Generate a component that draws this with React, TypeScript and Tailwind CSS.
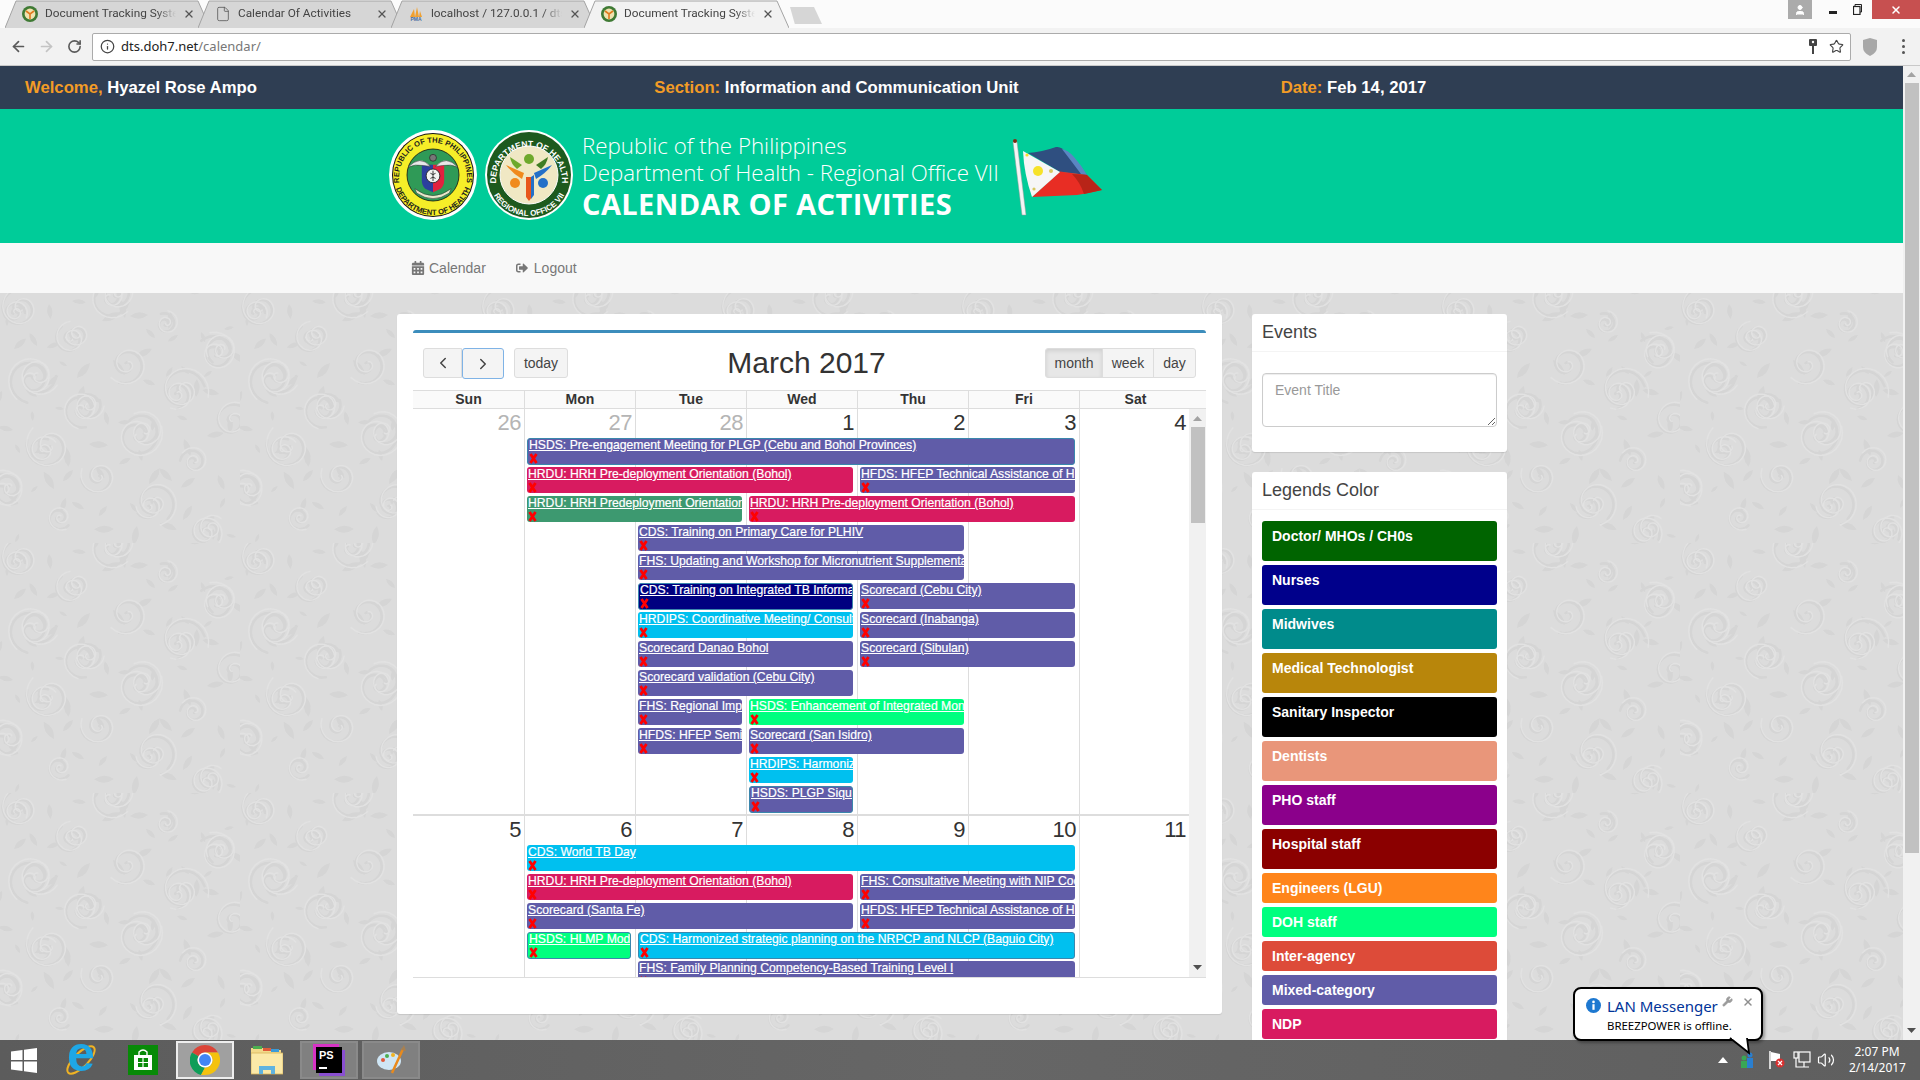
import React from "react";
import { ChevronLeft, ChevronRight, ArrowLeft, ArrowRight, RotateCw, Info, Star, X, Wrench, User, File, Volume2 } from "lucide-react";
import { FaCalendarAlt, FaSignOutAlt } from "react-icons/fa";

const PURPLE = "bg-[#605ca8]";
const PINK = "bg-[#d81b60]";
const SEA = "bg-[#3d9970]";
const NAVY = "bg-[#000080]";
const AQUA = "bg-[#00c0ef]";
const LIME = "bg-[#00ff7f]";

type Ev = { t: string; c: string; p: string; b?: boolean };

const week1: Ev[] = [
  { t: "HSDS: Pre-engagement Meeting for PLGP (Cebu and Bohol Provinces)", c: PURPLE, p: "col-start-2 col-span-5 row-start-2", b: true },
  { t: "HRDU: HRH Pre-deployment Orientation (Bohol)", c: PINK, p: "col-start-2 col-span-3 row-start-3" },
  { t: "HFDS: HFEP Technical Assistance of HFEP", c: PURPLE, p: "col-start-5 col-span-2 row-start-3" },
  { t: "HRDU: HRH Predeployment Orientation", c: SEA, p: "col-start-2 col-span-2 row-start-4" },
  { t: "HRDU: HRH Pre-deployment Orientation (Bohol)", c: PINK, p: "col-start-4 col-span-3 row-start-4" },
  { t: "CDS: Training on Primary Care for PLHIV", c: PURPLE, p: "col-start-3 col-span-3 row-start-5" },
  { t: "FHS: Updating and Workshop for Micronutrient Supplementation", c: PURPLE, p: "col-start-3 col-span-3 row-start-6" },
  { t: "CDS: Training on Integrated TB Information", c: NAVY, p: "col-start-3 col-span-2 row-start-7", b: true },
  { t: "Scorecard (Cebu City)", c: PURPLE, p: "col-start-5 col-span-2 row-start-7" },
  { t: "HRDIPS: Coordinative Meeting/ Consultation", c: AQUA, p: "col-start-3 col-span-2 row-start-8" },
  { t: "Scorecard (Inabanga)", c: PURPLE, p: "col-start-5 col-span-2 row-start-8" },
  { t: "Scorecard Danao Bohol", c: PURPLE, p: "col-start-3 col-span-2 row-start-9" },
  { t: "Scorecard (Sibulan)", c: PURPLE, p: "col-start-5 col-span-2 row-start-9" },
  { t: "Scorecard validation (Cebu City)", c: PURPLE, p: "col-start-3 col-span-2 row-start-10" },
  { t: "FHS: Regional Implementation", c: PURPLE, p: "col-start-3 col-span-1 row-start-11" },
  { t: "HSDS: Enhancement of Integrated Monitoring", c: LIME, p: "col-start-4 col-span-2 row-start-11" },
  { t: "HFDS: HFEP Seminar", c: PURPLE, p: "col-start-3 col-span-1 row-start-12" },
  { t: "Scorecard (San Isidro)", c: PURPLE, p: "col-start-4 col-span-2 row-start-12" },
  { t: "HRDIPS: Harmonization", c: AQUA, p: "col-start-4 col-span-1 row-start-13" },
  { t: "HSDS: PLGP Siquijor", c: PURPLE, p: "col-start-4 col-span-1 row-start-14", b: true },
];

const week2: Ev[] = [
  { t: "CDS: World TB Day", c: AQUA, p: "col-start-2 col-span-5 row-start-2" },
  { t: "HRDU: HRH Pre-deployment Orientation (Bohol)", c: PINK, p: "col-start-2 col-span-3 row-start-3" },
  { t: "FHS: Consultative Meeting with NIP Coordinators", c: PURPLE, p: "col-start-5 col-span-2 row-start-3" },
  { t: "Scorecard (Santa Fe)", c: PURPLE, p: "col-start-2 col-span-3 row-start-4" },
  { t: "HFDS: HFEP Technical Assistance of HFEP", c: PURPLE, p: "col-start-5 col-span-2 row-start-4" },
  { t: "HSDS: HLMP Module", c: LIME, p: "col-start-2 col-span-1 row-start-5", b: true },
  { t: "CDS: Harmonized strategic planning on the NRPCP and NLCP (Baguio City)", c: AQUA, p: "col-start-3 col-span-4 row-start-5", b: true },
  { t: "FHS: Family Planning Competency-Based Training Level I", c: PURPLE, p: "col-start-3 col-span-4 row-start-6" },
];

const legends: { t: string; c: string; h: string }[] = [
  { t: "Doctor/ MHOs / CH0s", c: "bg-[#006400]", h: "h-[40px]" },
  { t: "Nurses", c: "bg-[#00008b]", h: "h-[40px]" },
  { t: "Midwives", c: "bg-[#008b8b]", h: "h-[40px]" },
  { t: "Medical Technologist", c: "bg-[#b8860b]", h: "h-[40px]" },
  { t: "Sanitary Inspector", c: "bg-[#000000]", h: "h-[40px]" },
  { t: "Dentists", c: "bg-[#e9967a]", h: "h-[40px]" },
  { t: "PHO staff", c: "bg-[#8b008b]", h: "h-[40px]" },
  { t: "Hospital staff", c: "bg-[#8b0000]", h: "h-[40px]" },
  { t: "Engineers (LGU)", c: "bg-[#ff851b]", h: "h-[30px]" },
  { t: "DOH staff", c: "bg-[#00ff7f]", h: "h-[30px]" },
  { t: "Inter-agency", c: "bg-[#dd4b39]", h: "h-[30px]" },
  { t: "Mixed-category", c: "bg-[#605ca8]", h: "h-[30px]" },
  { t: "NDP", c: "bg-[#d81b60]", h: "h-[30px]" },
];

function spiral(cx: number, cy: number, r: number, start: number, turns: number, dir = 1) {
  let d = "";
  const n = Math.round(turns * 24);
  for (let i = 0; i <= n; i++) {
    const f = i / n;
    const a = start + dir * f * turns * Math.PI * 2;
    const rr = r * (1 - f * 0.9);
    d += `${i ? "L" : "M"}${(cx + rr * Math.cos(a)).toFixed(1)} ${(cy + rr * Math.sin(a)).toFixed(1)}`;
  }
  return d;
}

const swirlList = Array.from({ length: 30 }, (_, i) => ({
  x: (i * 67 + 14) % 240,
  y: (i * 97 + 20) % 250,
  r: 11 + (i * 7) % 13,
  a: i * 1.3,
  dir: i % 2 ? 1 : -1,
}));
const leafList = Array.from({ length: 70 }, (_, i) => ({
  x: (i * 41 + 7) % 240,
  y: (i * 59 + 33) % 250,
  l: 9 + (i * 5) % 12,
  a: (i * 47) % 360,
}));

function Texture() {
  return (
    <svg className="absolute inset-0 w-full h-full" aria-hidden="true">
      <defs>
        <pattern id="damask" width="240" height="250" patternUnits="userSpaceOnUse">
          {leafList.map((s, i) => (
            <path key={"l" + i} d={`M0 0 Q${s.l * 0.35} ${-s.l / 2} 0 ${-s.l} Q${-s.l * 0.35} ${-s.l / 2} 0 0Z`} transform={`translate(${s.x} ${s.y}) rotate(${s.a})`} fill="#d5d5d5" />
          ))}
          {swirlList.map((s, i) => (
            <path key={i} d={spiral(s.x, s.y, s.r, s.a, 1.6, s.dir)} fill="none" stroke="#d5d5d5" strokeWidth="2.6" strokeLinecap="round" />
          ))}
          {swirlList.map((s, i) => (
            <path key={"b" + i} d={spiral(s.x + 1.5, s.y - 1, s.r * 1.12, s.a + 0.5, 1.6, s.dir)} fill="none" stroke="#e2e2e2" strokeWidth="1.4" strokeLinecap="round" />
          ))}
        </pattern>
      </defs>
      <rect width="100%" height="100%" fill="url(#damask)" />
    </svg>
  );
}

function RedX() {
  return (
    <svg width="9" height="11" viewBox="0 0 9 11" className="block ml-[1px] mt-[1px]">
      <path d="M1.5 1 L7.5 10 M7.5 1 L1.5 10" stroke="#ff0000" strokeWidth="2.8" />
    </svg>
  );
}

function Event({ e }: { e: Ev }) {
  return (
    <div className={`${e.p} ${e.c} ${e.b ? "border border-[#3a87ad] -mx-[0.5px] -mt-[0.5px] h-[27px]" : "h-[26px]"} ml-[3px] mr-[4px] rounded-[3px] overflow-hidden relative z-10`}>
      <div className={`whitespace-nowrap overflow-hidden text-[12.2px] leading-[14px] text-white underline pl-[1px] [-webkit-text-stroke:0.2px_white] ${e.b ? "-mt-[1px]" : ""}`}>{e.t}</div>
      <RedX />
    </div>
  );
}

function Week({ days, events, muted, cls }: { days: string[]; events: Ev[]; muted: number; cls: string }) {
  const cols = ["col-start-1", "col-start-2", "col-start-3", "col-start-4", "col-start-5", "col-start-6", "col-start-7"];
  return (
    <div className={`grid grid-cols-[repeat(6,111px)_1fr] grid-rows-[repeat(14,29px)] border-b-2 border-[#ddd] ${cls}`}>
      {days.map((d, i) => (
        <div key={d} className={`${cols[i]} row-start-1 row-span-14 ${i > 0 ? "border-l border-[#ddd]" : ""} text-right pr-[3px] text-[22px] leading-[27px] tracking-[-0.5px] ${i < muted ? "text-[#b5b5b5]" : "text-[#333]"}`}>
          {d}
        </div>
      ))}
      {events.map((e) => (
        <Event key={e.t + e.p} e={e} />
      ))}
    </div>
  );
}

function Bar({ thumbTop, thumbH }: { thumbTop: string; thumbH: string }) {
  return (
    <div className="w-[17px] h-full bg-[#f1f1f1] flex flex-col items-center shrink-0">
      <div className={`${thumbTop} flex items-center justify-center w-full shrink-0`}>
        <svg width="9" height="5" viewBox="0 0 9 5"><path d="M4.5 0 L9 5 H0Z" fill="#a3a3a3" /></svg>
      </div>
      <div className={`${thumbH} w-[14px] bg-[#c1c1c1] shrink-0`} />
      <div className="flex-1" />
      <div className="h-[17px] flex items-center justify-center w-full shrink-0 mb-[1px]">
        <svg width="9" height="5" viewBox="0 0 9 5"><path d="M0 0 H9 L4.5 5Z" fill="#505050" /></svg>
      </div>
    </div>
  );
}

function RepublicLogo() {
  return (
    <svg width="90" height="92" viewBox="0 0 90 92">
      <defs>
        <path id="rTop" d="M14.2 63.5 A34 35 0 1 1 75.8 63.5" />
        <path id="rBot" d="M5.5 46 A39.5 40 0 0 0 84.5 46" />
      </defs>
      <ellipse cx="45" cy="46" rx="44" ry="45" fill="#fff" />
      <ellipse cx="45" cy="46" rx="41" ry="42" fill="#111" />
      <ellipse cx="45" cy="46" rx="40" ry="41" fill="#f6ee28" />
      <text fontSize="7.6" fontWeight="700" fill="#1c1c1c" fontFamily="Liberation Sans, sans-serif"><textPath href="#rTop" startOffset="50%" textAnchor="middle">REPUBLIC OF THE PHILIPPINES</textPath></text>
      <text fontSize="7.6" fontWeight="700" fill="#1c1c1c" fontFamily="Liberation Sans, sans-serif"><textPath href="#rBot" startOffset="50%" textAnchor="middle">DEPARTMENT OF HEALTH</textPath></text>
      <circle cx="45" cy="46" r="26" fill="#2f9a57" stroke="#111" strokeWidth="0.8" />
      <g transform="translate(45 46) scale(0.86) translate(-45 -46)">
        <path d="M32 34 H45 V66 L36 62 Q32 58 32 52Z" fill="#2b3f9e" />
        <path d="M45 34 H58 V52 Q58 58 54 62 L45 66Z" fill="#e2213f" />
        <path d="M16 37 Q30 22 42 36 L34 35 Q24 33 16 37Z" fill="#e8e8e8" stroke="#333" strokeWidth="0.6" />
        <path d="M74 37 Q60 22 48 36 L56 35 Q66 33 74 37Z" fill="#e8e8e8" stroke="#333" strokeWidth="0.6" />
        <circle cx="45" cy="26" r="4" fill="#777" stroke="#222" strokeWidth="0.8" />
        <circle cx="45" cy="47" r="8" fill="#f3f3f3" stroke="#222" />
        <path d="M45 41 V53 M42 44 Q45 47 48 44 M42 50 Q45 47 48 50" stroke="#222" strokeWidth="1" fill="none" />
        <path d="M24 62 Q45 78 66 62 L64 67 Q45 80 26 67Z" fill="#e8e8c8" stroke="#333" strokeWidth="0.6" />
      </g>
    </svg>
  );
}

function DohLogo() {
  return (
    <svg width="90" height="92" viewBox="0 0 90 92">
      <defs>
        <path id="dTop" d="M13.5 62 A33 34 0 1 1 76.5 62" />
        <path id="dBot" d="M4.5 46 A40.5 41 0 0 0 85.5 46" />
      </defs>
      <ellipse cx="45" cy="46" rx="44" ry="45" fill="#fff" />
      <ellipse cx="45" cy="46" rx="42" ry="43" fill="#1d5a1e" />
      <text fontSize="8.6" fontWeight="700" fill="#fff" fontFamily="Liberation Sans, sans-serif"><textPath href="#dTop" startOffset="50%" textAnchor="middle">DEPARTMENT OF HEALTH</textPath></text>
      <text fontSize="8" fontWeight="700" fill="#fff" fontFamily="Liberation Sans, sans-serif"><textPath href="#dBot" startOffset="50%" textAnchor="middle">REGIONAL OFFICE VII</textPath></text>
      <circle cx="45" cy="46" r="29" fill="#f0e8c4" stroke="#fff" />
      <path d="M22 36 L40 44 L38 50 Q28 44 22 36Z" fill="#f08a1d" />
      <path d="M68 36 L50 44 L52 50 Q62 44 68 36Z" fill="#2370c8" />
      <path d="M42 48 H48 V68 L45 72 L42 68Z" fill="#e8561a" />
      <path d="M47 48 L50 46 V66 L47 70Z" fill="#2370c8" />
      <path d="M26 28 L38 36 L33 40 Q27 35 26 28Z" fill="#6ea92c" />
      <path d="M64 28 L52 36 L57 40 Q63 35 64 28Z" fill="#3f7d22" />
      <circle cx="45" cy="30" r="5" fill="#6ea92c" />
      <circle cx="31" cy="54" r="5" fill="#f08a1d" />
      <circle cx="59" cy="54" r="5" fill="#2370c8" />
    </svg>
  );
}

function Flag() {
  return (
    <svg width="92" height="78" viewBox="0 0 92 78">
      <path d="M1 4 L3 1 L5 4 L14 77 H10Z" fill="#f4f4f4" stroke="#9a9a9a" strokeWidth="0.5" />
      <circle cx="3" cy="3" r="2" fill="#7a2a10" />
      <path d="M16 15 Q30 14 44 9 Q50 8 54 15 Q66 26 75 37 L48 34Z" fill="#2f4f80" />
      <path d="M50 11 Q56 12 62 19 Q70 28 75 37 L69 36 Q60 24 50 11Z" fill="#5b86c2" />
      <path d="M48 33.5 L75 37 L90 52 Q78 55 65 57 Q42 58 20 59Z" fill="#e82d24" />
      <path d="M60 36 L75 37 L90 52 L72 56 Q68 44 60 36Z" fill="#b82418" />
      <path d="M11 13 L48 34 L20 59 Q12 36 11 13Z" fill="#f6f6f6" />
      <circle cx="26" cy="33" r="5" fill="#f6e22a" />
      <circle cx="15" cy="17" r="1.6" fill="#f6e22a" />
      <circle cx="39" cy="33" r="2" fill="#d8c860" />
      <circle cx="22" cy="51" r="1.6" fill="#d8c860" />
    </svg>
  );
}

function Favicon() {
  return (
    <svg width="16" height="16" viewBox="0 0 16 16" className="shrink-0">
      <circle cx="8" cy="8" r="8" fill="#3f7a34" />
      <circle cx="8" cy="8" r="5.4" fill="#efe3b0" />
      <path d="M4 5 L8 8 L12 5 M8 8 V13" stroke="#e07a1f" strokeWidth="1.6" fill="none" />
    </svg>
  );
}

function Tab({ title, icon, active }: { title: string; icon: React.ReactNode; active?: boolean }) {
  return (
    <div className={`relative h-[28px] w-[205px] -mr-[12px] flex items-center pl-[17px] pr-[15px] gap-[7px] ${active ? "z-10" : ""}`}>
      <svg width="205" height="28" viewBox="0 0 205 28" className="absolute inset-0">
        <path d="M0 28 L11 1 H193 L205 28" fill={active ? "#f2f2f2" : "#d6d6d6"} stroke="#a3a3a3" strokeWidth="1" />
      </svg>
      <span className="relative">{icon}</span>
      <span className="relative flex-1 min-w-0 overflow-hidden whitespace-nowrap text-[11.8px] text-[#444] font-['Roboto',sans-serif] [mask-image:linear-gradient(to_right,black_85%,transparent)]">{title}</span>
      <X size={12} strokeWidth={2.6} color="#555" className="relative shrink-0" />
    </div>
  );
}

function ChromeBar() {
  return (
    <>
      <div className="h-[28px] bg-[#fbfbfb] flex shrink-0 relative">
        <div className="flex pl-[5px] items-start">
          <Tab title="Document Tracking System" icon={<Favicon />} />
          <Tab title="Calendar Of Activities" icon={<File size={16} strokeWidth={1.2} color="#555" />} />
          <Tab
            title="localhost / 127.0.0.1 / dts_doh7"
            icon={
              <span className="flex flex-col items-center w-[16px] leading-none">
                <svg width="14" height="10" viewBox="0 0 14 10"><path d="M1 10 L5 2 L6 10 M6 10 L8 0 L10 10 M10 10 L11 4 L13 10" fill="#f0a030" /></svg>
                <span className="text-[5px] font-bold text-[#456b9e] font-['Liberation_Sans',sans-serif]">PMA</span>
              </span>
            }
          />
          <Tab title="Document Tracking System" icon={<Favicon />} active />
          <div className="ml-[13px] mt-[7px] w-[32px] h-[17px] bg-[#d6d6d6] [clip-path:polygon(0_0,75%_0,100%_100%,15%_100%)]" />
        </div>
        <div className="flex-1" />
        <div className="flex items-start">
          <div className="w-[24px] h-[19px] bg-[#ababab] flex items-center justify-center"><User size={12} color="#fff" fill="#fff" /></div>
          <div className="w-[60px] h-[19px] flex items-center pl-[17px] gap-[16px]">
            <div className="w-[8px] h-[3px] bg-[#222] mt-[6px]" />
            <svg width="9" height="11" viewBox="0 0 9 11" fill="none" stroke="#222"><path d="M2 2 V0.5 H8.5 V8 H7" /><rect x="0.5" y="2.5" width="6.5" height="8" strokeWidth="1.2" /></svg>
          </div>
          <div className="w-[48px] h-[19px] bg-[#c75050] flex items-center justify-center"><X size={12} strokeWidth={3} color="#fff" /></div>
        </div>
      </div>
      <div className="h-[38px] bg-[#f2f2f2] border-b border-[#c9c9c9] flex items-center shrink-0 pl-[10px] relative">
        <ArrowLeft size={17} strokeWidth={2.4} color="#5a5a5a" />
        <ArrowRight size={17} strokeWidth={2.4} color="#c4c4c4" className="ml-[11px]" />
        <RotateCw size={15} strokeWidth={2.6} color="#5a5a5a" className="ml-[12px]" />
        <div className="ml-[10px] w-[1759px] h-[28px] bg-white border border-[#ababab] rounded-[2px] flex items-center pl-[7px] pr-[6px] text-[13px] font-['Noto_Sans',sans-serif]">
          <Info size={15} color="#444" strokeWidth={2} />
          <span className="ml-[6px] text-[#222]">dts.doh7.net</span>
          <span className="text-[#777]">/calendar/</span>
          <div className="flex-1" />
          <svg width="8" height="16" viewBox="0 0 8 16"><rect x="0" y="0" width="8" height="7" rx="1" fill="#444" /><rect x="3" y="6" width="2" height="9" fill="#444" /><circle cx="4" cy="3" r="1.2" fill="#fff" /></svg>
          <Star size={15} strokeWidth={1.8} color="#444" className="ml-[12px]" />
        </div>
        <svg width="14" height="18" viewBox="0 0 14 18" className="ml-[12px]"><path d="M7 0 L14 2 V9 Q14 15 7 18 Q0 15 0 9 V2Z" fill="#a8a8a8" /></svg>
        <div className="ml-[25px] flex flex-col gap-[3px]">
          <div className="w-[3px] h-[3px] bg-[#555] rounded-full" />
          <div className="w-[3px] h-[3px] bg-[#555] rounded-full" />
          <div className="w-[3px] h-[3px] bg-[#555] rounded-full" />
        </div>
      </div>
    </>
  );
}

function Calendar() {
  const heads = ["Sun", "Mon", "Tue", "Wed", "Thu", "Fri", "Sat"];
  return (
    <div className="w-[825px] h-[700px] bg-white rounded-[3px] shadow-[0_1px_1px_rgba(0,0,0,0.1)] p-4 shrink-0 relative">
      <div className="border-t-[3px] border-[#3c8dbc] rounded-t-[3px]">
        <div className="h-[58px] pt-[15px] px-[10px] flex justify-between items-start">
          <div className="flex">
            <button className="w-[39px] h-[30px] bg-[#f4f4f4] border border-[#ddd] rounded-l-[3px] flex items-center justify-center text-[#444]"><ChevronLeft size={18} /></button>
            <button className="w-[42px] h-[31px] bg-[#f4f4f4] border border-[#7fb3e6] rounded-[3px] flex items-center justify-center text-[#444]"><ChevronRight size={18} /></button>
            <button className="ml-[10px] w-[54px] h-[30px] bg-[#f4f4f4] border border-[#ddd] rounded-[3px] text-[14px] text-[#444]">today</button>
          </div>
          <div className="text-[30px] leading-[30px] text-[#333]">March 2017</div>
          <div className="flex text-[14px] text-[#444]">
            <button className="w-[58px] h-[30px] bg-[#e7e7e7] border border-[#ddd] rounded-l-[3px] shadow-[inset_0_2px_4px_rgba(0,0,0,0.1)]">month</button>
            <button className="w-[52px] h-[30px] -ml-[1px] bg-[#f4f4f4] border border-[#ddd]">week</button>
            <button className="w-[43px] h-[30px] -ml-[1px] bg-[#f4f4f4] border border-[#ddd] rounded-r-[3px]">day</button>
          </div>
        </div>
        <div className="grid grid-cols-[repeat(6,111px)_1fr] h-[17px] bg-[#fafafa] border-t border-b border-[#ddd] box-content -mt-[1px]">
          {heads.map((h, i) => (
            <div key={h} className={`text-center text-[14px] font-bold leading-[17px] text-[#333] ${i > 0 ? "border-l border-[#ddd]" : ""} ${i === 6 ? "pr-[15px]" : ""}`}>{h}</div>
          ))}
        </div>
        <div className="flex h-[569px] border-b border-[#ddd]">
          <div className="flex-1 min-w-0 overflow-hidden">
            <Week days={["26", "27", "28", "1", "2", "3", "4"]} events={week1} muted={3} cls="h-[407px]" />
            <Week days={["5", "6", "7", "8", "9", "10", "11"]} events={week2} muted={0} cls="h-[408px]" />
          </div>
          <Bar thumbTop="h-[18px]" thumbH="h-[96px]" />
        </div>
      </div>
    </div>
  );
}

function Sidebar() {
  return (
    <div className="w-[255px] flex flex-col gap-[20px] shrink-0 relative">
      <div className="bg-white rounded-[3px] shadow-[0_1px_1px_rgba(0,0,0,0.1)] h-[138px]">
        <div className="h-[38px] px-[10px] border-b border-[#f4f4f4] text-[18px] leading-[37px] text-[#444]">Events</div>
        <div className="px-[10px] pt-[21px]">
          <textarea placeholder="Event Title" className="block w-full h-[54px] border border-[#ccc] rounded-[4px] px-[12px] py-[6px] text-[14px] leading-[20px] placeholder:text-[#999] shadow-[inset_0_1px_1px_rgba(0,0,0,0.075)]" />
        </div>
      </div>
      <div className="bg-white rounded-[3px] shadow-[0_1px_1px_rgba(0,0,0,0.1)]">
        <div className="h-[38px] px-[10px] border-b border-[#f4f4f4] text-[18px] leading-[37px] text-[#444]">Legends Color</div>
        <div className="px-[10px] pt-[11px] pb-[10px] flex flex-col gap-[4px]">
          {legends.map((l) => (
            <div key={l.t} className={`${l.c} ${l.h} rounded-[3px] px-[10px] pt-[5px] text-[14px] leading-[20px] font-bold text-white`}>{l.t}</div>
          ))}
        </div>
      </div>
    </div>
  );
}

function Taskbar() {
  return (
    <div className="h-[40px] shrink-0 bg-gradient-to-r from-[#5c5c5c] via-[#666666] to-[#5f5f5f] flex items-center relative text-white">
      <div className="w-[62px] pl-[11px]">
        <svg width="26" height="25" viewBox="0 0 26 25"><path d="M0 3.6 L11.5 2 V12 H0Z M13 1.8 L26 0 V12 H13Z M0 13.4 H11.5 V23 L0 21.4Z M13 13.4 H26 V25 L13 23.2Z" fill="#fff" /></svg>
      </div>
      <div className="w-[38px] h-[38px] relative flex items-center justify-center">
        <svg width="36" height="36" viewBox="0 0 36 36" className="absolute left-[1px] top-[1px]"><ellipse cx="18" cy="18" rx="18" ry="7" transform="rotate(-45 18 18)" fill="none" stroke="#f0b323" strokeWidth="2" /></svg>
        <span className="relative text-[50px] leading-[38px] font-bold text-[#1ea7e6] font-['Liberation_Sans',sans-serif] -mt-[12px]">e</span>
      </div>
      <div className="w-[76px] h-[38px] flex items-center pl-[28px]">
        <div className="w-[30px] h-[30px] bg-[#078a07] flex flex-col items-center justify-center">
          <svg width="20" height="22" viewBox="0 0 20 22"><path d="M6 6 V3 Q10 -1 14 3 V6" fill="none" stroke="#fff" strokeWidth="1.4" /><path d="M1 6 H19 V21 H1Z" fill="#fff" /><path d="M5 9 H9.4 V13 H5Z M10.6 9 H15 V13 H10.6Z M5 14 H9.4 V18 H5Z M10.6 14 H15 V18 H10.6Z" fill="#078a07" /></svg>
        </div>
      </div>
      <div className="w-[58px] h-[38px] border-2 border-[#eeeeee] bg-[#a0a0a0] flex items-center justify-center">
        <svg width="30" height="30" viewBox="0 0 30 30">
          <path d="M15 0 A15 15 0 0 1 28 7.5 H15 A7.5 7.5 0 0 0 8.5 11.2 L2 7.5 A15 15 0 0 1 15 0Z" fill="#db4437" />
          <path d="M2 7.5 L8.5 11.2 A7.5 7.5 0 0 0 15 22.5 L11 30 A15 15 0 0 1 2 7.5Z" fill="#0f9d58" />
          <path d="M28 7.5 A15 15 0 0 1 15 30 H11 L15 22.5 A7.5 7.5 0 0 0 21.5 11.2 L15 7.5Z" fill="#f4c20d" />
          <circle cx="15" cy="15" r="7.5" fill="#fff" /><circle cx="15" cy="15" r="6" fill="#4285f4" />
        </svg>
      </div>
      <div className="w-[66px] h-[38px] flex items-center justify-center">
        <svg width="32" height="30" viewBox="0 0 32 30">
          <path d="M0 3 H12 L14 5 H30 V28 H0Z" fill="#f2d98a" />
          <path d="M2 1 H11 V4 H2Z" fill="#4caf50" /><path d="M12 3 H20 V6 H12Z" fill="#e05a3a" /><path d="M20 4 H28 V7 H20Z" fill="#3a9bd9" />
          <path d="M0 8 H32 V29 H0Z" fill="#fbe9a8" stroke="#d8b45a" strokeWidth="0.8" />
          <path d="M8 29 V21 H24 V29 H20 V25 H12 V29Z" fill="#5fb3e0" />
        </svg>
      </div>
      <div className="w-[58px] h-[38px] border-2 border-[#8a8a8a] bg-[#808080] flex items-center justify-center">
        <div className="relative w-[26px] h-[26px] bg-[#000] shadow-[-3px_-3px_0_#d633c4,3px_3px_0_#8a4fd0] flex flex-col px-[3px] pt-[2px]">
          <span className="text-[11px] leading-[13px] font-bold font-['Liberation_Sans',sans-serif]">PS</span>
          <div className="w-[8px] h-[2px] bg-white mt-[5px]" />
        </div>
      </div>
      <div className="w-[58px] h-[38px] ml-[4px] border-2 border-[#8a8a8a] bg-[#808080] flex items-center justify-center">
        <svg width="30" height="30" viewBox="0 0 30 30">
          <ellipse cx="13" cy="16" rx="12" ry="9" fill="#cfe6f5" />
          <circle cx="7" cy="15" r="2" fill="#e05a3a" /><circle cx="11" cy="11" r="2" fill="#4caf50" /><circle cx="17" cy="10" r="2" fill="#f0b323" />
          <path d="M16 28 L27 4" stroke="#e88a1d" strokeWidth="2.5" /><path d="M25 5 L28 0 L30 6Z" fill="#a88050" />
        </svg>
      </div>
      <div className="flex-1" />
      <div className="flex items-center pr-[15px]">
        <svg width="10" height="6" viewBox="0 0 10 6"><path d="M5 0 L10 6 H0Z" fill="#fff" /></svg>
        <svg width="14" height="16" viewBox="0 0 14 16" className="ml-[12px]"><circle cx="4" cy="6" r="2.5" fill="#3aa655" /><path d="M1 16 V9 H7 V16Z" fill="#3aa655" /><circle cx="10" cy="3" r="2.5" fill="#2a7fd0" /><path d="M7 16 V6 H13 V16Z" fill="#2a7fd0" /></svg>
        <svg width="16" height="18" viewBox="0 0 16 18" className="ml-[15px]"><path d="M1 0 V18" stroke="#fff" strokeWidth="1.5" /><path d="M2 1 L11 3 V10 L2 10Z" fill="#fff" /><circle cx="11" cy="12" r="4.5" fill="#d83030" /><path d="M9 10 L13 14 M13 10 L9 14" stroke="#fff" strokeWidth="1.2" /></svg>
        <svg width="18" height="18" viewBox="0 0 18 18" className="ml-[8px]" fill="none" stroke="#fff" strokeWidth="1.2"><rect x="6" y="1" width="11" height="10" /><rect x="1" y="1" width="4" height="6" /><path d="M3 7 V16 H16 M11 11 V16" /></svg>
        <Volume2 size={18} color="#fff" strokeWidth={1.6} className="ml-[6px]" />
        <div className="ml-[14px] w-[56px] text-center text-[12px] leading-[16px] font-['Noto_Sans',sans-serif] whitespace-nowrap">
          <div>2:07 PM</div>
          <div>2/14/2017</div>
        </div>
      </div>
    </div>
  );
}

function LanPopup() {
  return (
    <div className="absolute left-[1573px] top-[987px] z-30 w-[190px] h-[54px] bg-white border-2 border-black rounded-[8px] shadow-[2px_2px_3px_rgba(0,0,0,0.3)] font-['Noto_Sans',sans-serif]">
      <svg width="22" height="18" viewBox="0 0 22 18" className="absolute left-[154px] top-[48px]"><path d="M1 1 L20 16 L18 1" fill="#fff" stroke="#000" strokeWidth="1.8" /><path d="M3 0 H16.5 V2 H3Z" fill="#fff" /></svg>
      <div className="flex items-center pl-[11px] pt-[7px] h-[26px]">
        <svg width="15" height="15" viewBox="0 0 15 15" className="shrink-0"><circle cx="7.5" cy="7.5" r="7.5" fill="#1d78d0" /><rect x="6.4" y="6.2" width="2.2" height="5.6" fill="#fff" /><circle cx="7.5" cy="3.9" r="1.3" fill="#fff" /></svg>
        <span className="ml-[6px] text-[15px] leading-[20px] text-[#003399] whitespace-nowrap">LAN Messenger</span>
        <Wrench size={11} color="#9a9a9a" fill="#9a9a9a" className="ml-[4px] -mt-[8px] shrink-0" />
        <X size={12} strokeWidth={3} color="#8f8f8f" className="ml-[9px] -mt-[8px] shrink-0" />
      </div>
      <div className="pl-[32px] pt-[3px] text-[11.4px] leading-[16px] text-black whitespace-nowrap">BREEZPOWER is offline.</div>
    </div>
  );
}

export default function App() {
  return (
    <div className="w-[1920px] h-[1080px] overflow-hidden flex flex-col relative font-['Liberation_Sans',Arial,sans-serif]">
      <ChromeBar />
      <div className="flex-1 min-h-0 flex overflow-hidden">
        <div className="flex-1 min-w-0 flex flex-col">
          <div className="h-[43px] shrink-0 bg-[#2f3e53] grid grid-cols-3 items-center text-[16.7px] font-bold text-white">
            <div className="pl-[25px]"><span className="text-[#f39c26]">Welcome,</span> Hyazel Rose Ampo</div>
            <div className="pl-[20px]"><span className="text-[#f39c26]">Section:</span> Information and Communication Unit</div>
            <div className="pl-[12px]"><span className="text-[#f39c26]">Date:</span> Feb 14, 2017</div>
          </div>
          <div className="h-[134px] shrink-0 bg-[#00cc99] flex items-start pl-[388px] pt-[20px] text-white">
            <RepublicLogo />
            <div className="ml-[6px]"><DohLogo /></div>
            <div className="ml-[8px] w-[430px] font-['Open_Sans',sans-serif] pt-[3px]">
              <div className="text-[22.3px] leading-[27px] font-light whitespace-nowrap">Republic of the Philippines</div>
              <div className="text-[22.3px] leading-[27px] font-light whitespace-nowrap">Department of Health - Regional Office VII</div>
              <div className="text-[29px] leading-[36px] font-bold whitespace-nowrap tracking-[0.4px]">CALENDAR OF ACTIVITIES</div>
            </div>
            <div className="mt-[9px]"><Flag /></div>
          </div>
          <div className="h-[50px] shrink-0 bg-[#f8f8f8] flex items-center pl-[411px] text-[14px] text-[#777]">
            <FaCalendarAlt size={14} />
            <span className="ml-[4px]">Calendar</span>
            <FaSignOutAlt size={12} className="ml-[30px]" />
            <span className="ml-[6px]">Logout</span>
          </div>
          <div className="flex-1 min-h-0 bg-[#dcdcdc] relative overflow-hidden flex items-start gap-[30px] pl-[397px] pt-[21px]">
            <Texture />
            <Calendar />
            <Sidebar />
          </div>
        </div>
        <Bar thumbTop="h-[17px]" thumbH="h-[770px]" />
      </div>
      <Taskbar />
      <LanPopup />
    </div>
  );
}
